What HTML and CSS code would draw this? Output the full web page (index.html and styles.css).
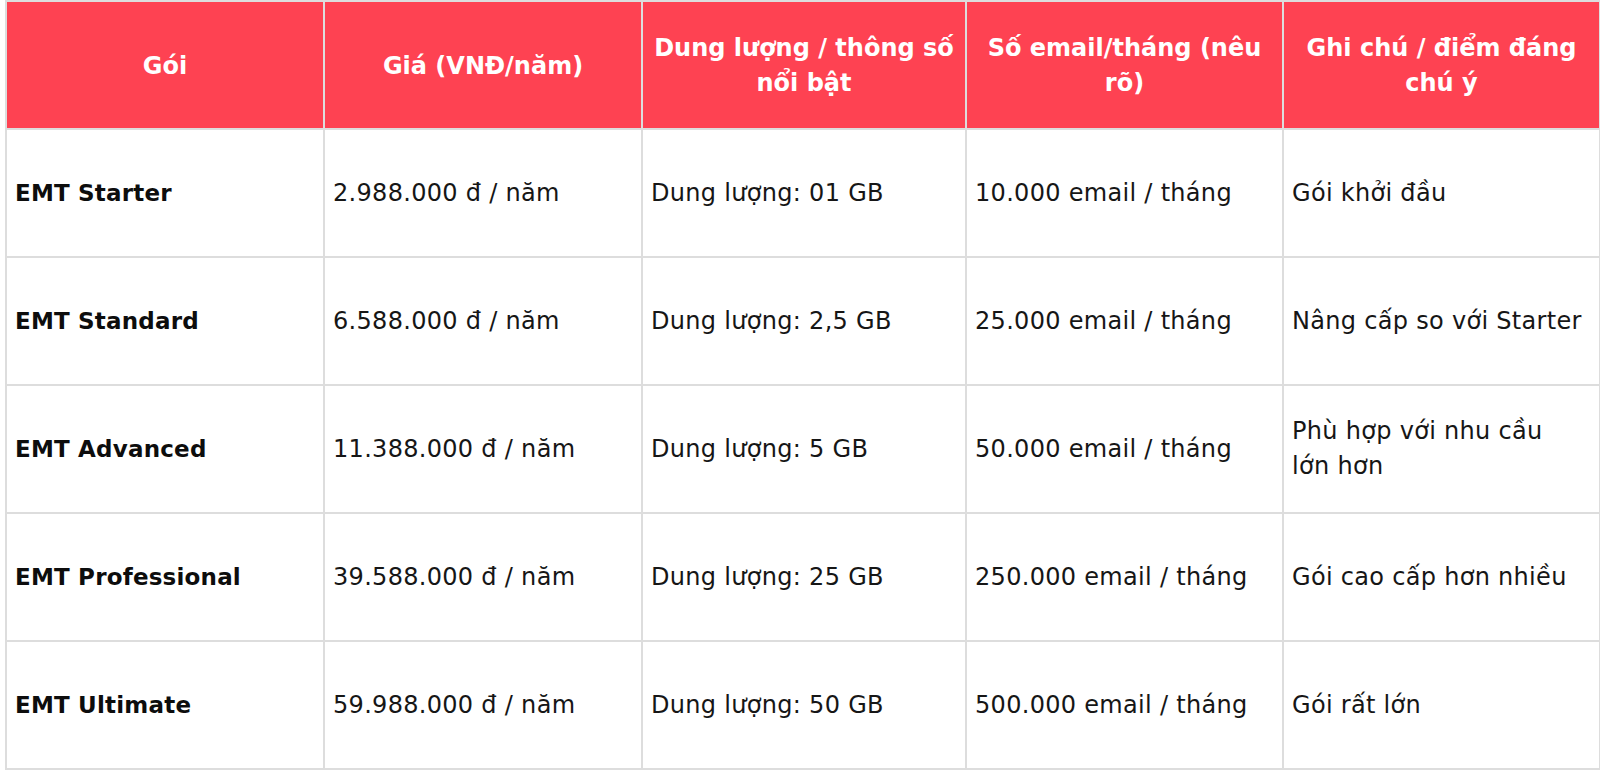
FILE: index.html
```html
<!DOCTYPE html>
<html lang="vi">
<head>
<meta charset="utf-8">
<title>Bảng giá EMT</title>
<link rel="stylesheet" href="styles.css">
</head>
<body>
<table class="price-table">
  <colgroup>
    <col class="c1"><col class="c2"><col class="c3"><col class="c4"><col class="c5">
  </colgroup>
  <thead>
    <tr>
      <th>Gói</th>
      <th>Giá (VNĐ/năm)</th>
      <th>Dung lượng / thông số nổi bật</th>
      <th>Số email/tháng (nêu rõ)</th>
      <th>Ghi chú / điểm đáng chú ý</th>
    </tr>
  </thead>
  <tbody>
    <tr>
      <td class="name">EMT Starter</td>
      <td>2.988.000 đ / năm</td>
      <td>Dung lượng: 01 GB</td>
      <td>10.000 email / tháng</td>
      <td class="note">Gói khởi đầu</td>
    </tr>
    <tr>
      <td class="name">EMT Standard</td>
      <td>6.588.000 đ / năm</td>
      <td>Dung lượng: 2,5 GB</td>
      <td>25.000 email / tháng</td>
      <td class="note">Nâng cấp so với Starter</td>
    </tr>
    <tr>
      <td class="name">EMT Advanced</td>
      <td>11.388.000 đ / năm</td>
      <td>Dung lượng: 5 GB</td>
      <td>50.000 email / tháng</td>
      <td class="note">Phù hợp với nhu cầu lớn hơn</td>
    </tr>
    <tr>
      <td class="name">EMT Professional</td>
      <td>39.588.000 đ / năm</td>
      <td>Dung lượng: 25 GB</td>
      <td>250.000 email / tháng</td>
      <td class="note">Gói cao cấp hơn nhiều</td>
    </tr>
    <tr>
      <td class="name">EMT Ultimate</td>
      <td>59.988.000 đ / năm</td>
      <td>Dung lượng: 50 GB</td>
      <td>500.000 email / tháng</td>
      <td class="note">Gói rất lớn</td>
    </tr>
  </tbody>
</table>
</body>
</html>
```

FILE: styles.css
```css
html, body {
  margin: 0;
  padding: 0;
  background: #ffffff;
}
body {
  padding: 0 1px 0 5px;
  font-family: "DejaVu Sans", "Open Sans", sans-serif;
  color: #111111;
}
.price-table {
  width: 1594px;
  border-collapse: collapse;
  table-layout: fixed;
}
.c1 { width: 318px; }
.c2 { width: 318px; }
.c3 { width: 324px; }
.c4 { width: 317px; }
.c5 { width: 317px; }
.price-table th,
.price-table td {
  border: 2px solid #dddddd;
  vertical-align: middle;
}
.price-table th {
  height: 124px;
  background: #fe4252;
  color: #ffffff;
  font-size: 24px;
  font-weight: 700;
  line-height: 35px;
  text-align: center;
  padding: 2px 2px 0;
}
.price-table td {
  height: 126px;
  font-size: 24px;
  letter-spacing: 0.3px;
  line-height: 35px;
  text-align: left;
  padding: 0 6px 0 8px;
  color: #161616;
}
.price-table td.name {
  font-size: 23px;
  letter-spacing: 0.2px;
  font-weight: 700;
  color: #0d0d0d;
}
.price-table td.note {
  padding-right: 14px;
}
```
